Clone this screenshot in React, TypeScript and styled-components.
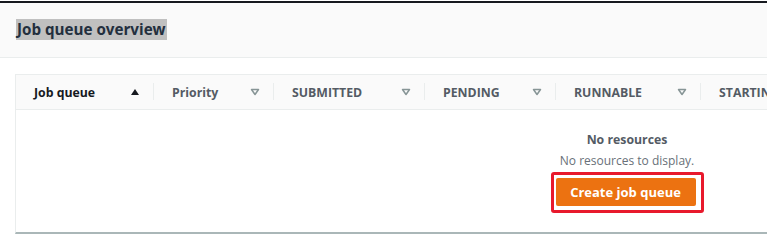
import React from "react";
import styled, { createGlobalStyle } from "styled-components";

const GlobalStyle = createGlobalStyle`
  html, body {
    margin: 0;
    padding: 0;
    background: #ffffff;
    overflow: hidden;
  }
  body {
    font-family: "Open Sans", "Noto Sans", Arial, sans-serif;
    color: #16191f;
  }
`;

const Page = styled.div`
  width: 767px;
  height: 245px;
  padding-top: 1px;
  box-sizing: border-box;
  overflow: hidden;
`;

const Header = styled.div`
  border-top: 2px solid #16191f;
  background: #fafafa;
  border-bottom: 1px solid #eaeded;
  height: 57px;
  padding: 15px 0 0 16px;
  box-sizing: border-box;
`;

const Title = styled.span`
  display: inline-block;
  background: #c0c0c0;
  font-size: 15.2px;
  font-weight: 700;
  line-height: 21px;
  padding: 0 1px;
  color: #232f3e;
`;

const Card = styled.div`
  margin: 16px 0 0 15px;
  width: 1222px;
  border-top: 1px solid #eaeded;
  border-left: 1px solid #eaeded;
  border-bottom: 2px solid #aab7b8;
  background: #ffffff;
`;

const HeadRow = styled.div`
  display: flex;
  height: 34px;
  background: #fafafa;
  border-bottom: 1px solid #eaeded;
`;

const HeadCell = styled.div<{ $w: number }>`
  flex: 0 0 ${(p) => p.$w}px;
  display: flex;
  align-items: center;
  justify-content: space-between;
  padding: 0 13px 0 19px;
  box-sizing: border-box;
  position: relative;
  &:first-child {
    padding-left: 18px;
  }
  &:not(:first-child)::before {
    content: "";
    position: absolute;
    left: 0;
    top: 8px;
    bottom: 9px;
    width: 1px;
    background: #eaeded;
  }
`;

const HeadLabel = styled.span<{ $active?: boolean }>`
  font-size: 12.3px;
  font-weight: 700;
  color: ${(p) => (p.$active ? "#16191f" : "#545b64")};
  white-space: nowrap;
`;

const Body = styled.div`
  display: flex;
  flex-direction: column;
  align-items: center;
  padding: 20px 0 19px;
`;

const EmptyTitle = styled.div`
  font-size: 12.3px;
  font-weight: 700;
  line-height: 20px;
  color: #545b64;
`;

const EmptyText = styled.div`
  font-size: 12px;
  line-height: 22px;
  color: #687078;
`;

const Highlight = styled.div`
  border: 3px solid #e8192c;
  border-radius: 3px;
  padding: 3px 5px 4px 2px;
`;

const PrimaryButton = styled.button`
  display: block;
  width: 140px;
  height: 28px;
  border: none;
  border-radius: 2px;
  background: #ec7211;
  color: #ffffff;
  font-family: inherit;
  font-size: 13px;
  font-weight: 700;
  cursor: pointer;
`;

const SortIcon = ({ active }: { active?: boolean }) =>
  active ? (
    <svg width="10" height="8" viewBox="0 0 10 8">
      <path d="M1 7 L5 1 L9 7 Z" fill="#16191f" />
    </svg>
  ) : (
    <svg width="10" height="8" viewBox="0 0 10 8">
      <path d="M1.5 1.5 L8.5 1.5 L5 6.5 Z" fill="none" stroke="#879596" strokeWidth="1.5" strokeLinejoin="round" />
    </svg>
  );

const columns = [
  { label: "Job queue", w: 137, active: true },
  { label: "Priority", w: 120 },
  { label: "SUBMITTED", w: 151 },
  { label: "PENDING", w: 131 },
  { label: "RUNNABLE", w: 145 },
  { label: "STARTING", w: 130 },
];

export default function App() {
  return (
    <Page>
      <GlobalStyle />
      <Header>
        <Title>Job queue overview</Title>
      </Header>
      <Card>
        <HeadRow>
          {columns.map((c) => (
            <HeadCell key={c.label} $w={c.w}>
              <HeadLabel $active={c.active}>{c.label}</HeadLabel>
              <SortIcon active={c.active} />
            </HeadCell>
          ))}
        </HeadRow>
        <Body>
          <EmptyTitle>No resources</EmptyTitle>
          <EmptyText>No resources to display.</EmptyText>
          <Highlight>
            <PrimaryButton>Create job queue</PrimaryButton>
          </Highlight>
        </Body>
      </Card>
    </Page>
  );
}
